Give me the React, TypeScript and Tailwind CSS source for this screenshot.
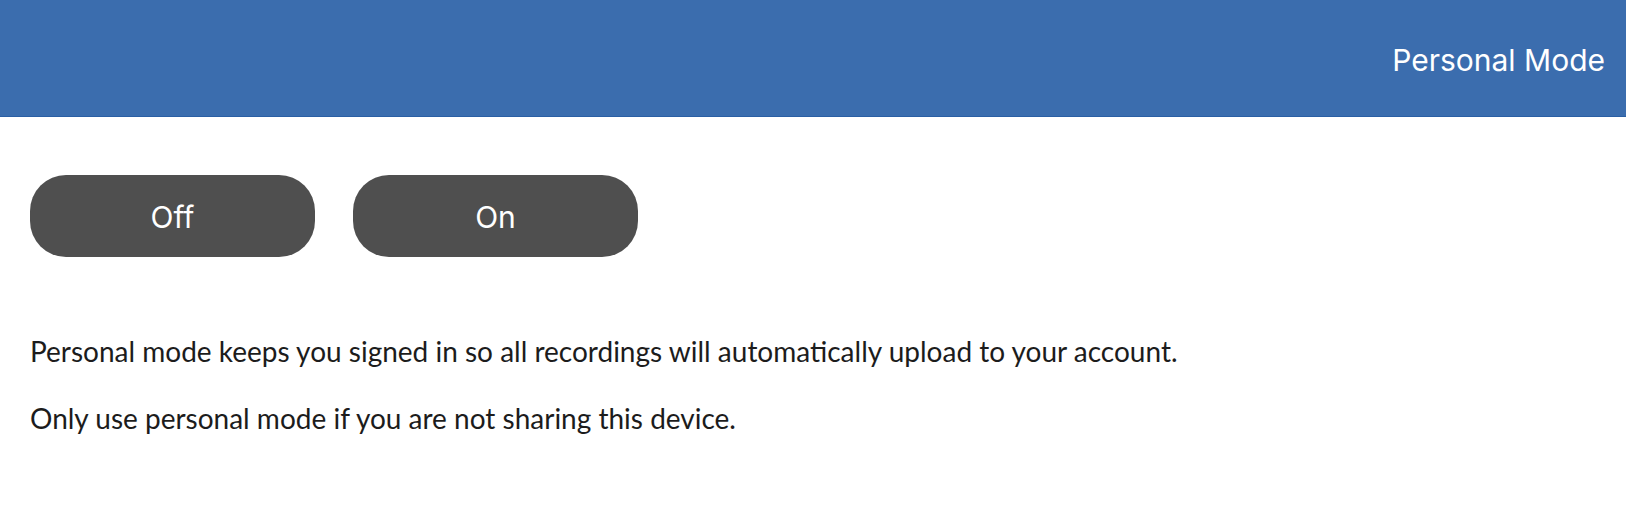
export default function App() {
  return (
    <div className="min-h-[516px] w-full bg-white">
      {/* top bar */}
      <header className="flex h-[117px] items-center justify-end border-b border-[#2a5fa4] bg-[#3b6dae] pr-[21px] pt-[5px]">
        <h1 className="font-['Inter',sans-serif] text-[30px] font-normal text-white">Personal Mode</h1>
      </header>

      <main className="px-[30px] pt-[58px]">
        {/* mode buttons */}
        <div className="flex gap-[38px]">
          <button className="h-[82px] w-[285px] rounded-[36px] bg-[#4f4f4f] pt-[2px] font-['Inter',sans-serif] text-[30px] text-white">
            Off
          </button>
          <button className="h-[82px] w-[285px] rounded-[36px] bg-[#4f4f4f] pt-[2px] font-['Inter',sans-serif] text-[30px] text-white">
            On
          </button>
        </div>

        {/* description */}
        <div className="mt-[78px] space-y-[35px] font-['Lato',sans-serif] text-[28px] leading-[32px] text-[#1c1c1c]">
          <p>Personal mode keeps you signed in so all recordings will automatically upload to your account.</p>
          <p>Only use personal mode if you are not sharing this device.</p>
        </div>
      </main>
    </div>
  );
}
